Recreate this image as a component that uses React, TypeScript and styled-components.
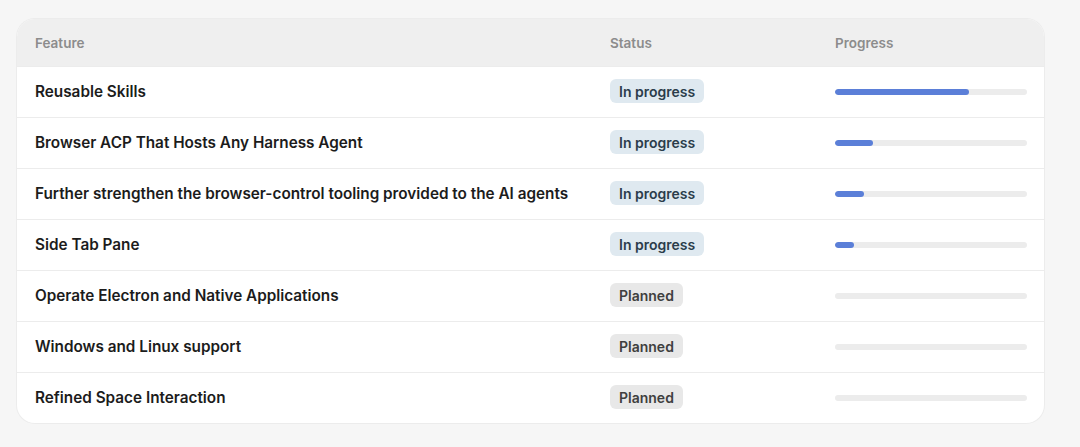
import styled, { createGlobalStyle } from 'styled-components';

type Status = 'progress' | 'planned';

interface Feature {
  name: string;
  status: Status;
  progress: number;
}

const features: Feature[] = [
  { name: 'Reusable Skills', status: 'progress', progress: 70 },
  { name: 'Browser ACP That Hosts Any Harness Agent', status: 'progress', progress: 20 },
  {
    name: 'Further strengthen the browser-control tooling provided to the AI agents',
    status: 'progress',
    progress: 15,
  },
  { name: 'Side Tab Pane', status: 'progress', progress: 10 },
  { name: 'Operate Electron and Native Applications', status: 'planned', progress: 0 },
  { name: 'Windows and Linux support', status: 'planned', progress: 0 },
  { name: 'Refined Space Interaction', status: 'planned', progress: 0 },
];

const App = () => {
  return (
    <Page>
      <GlobalStyle />
      <Card>
        <HeaderRow>
          <HeadCell>Feature</HeadCell>
          <HeadCell>Status</HeadCell>
          <HeadCell>Progress</HeadCell>
        </HeaderRow>
        {features.map((f) => (
          <Row key={f.name}>
            <Name>{f.name}</Name>
            <div>
              <Badge $status={f.status}>
                {f.status === 'progress' ? 'In progress' : 'Planned'}
              </Badge>
            </div>
            <Track>
              {f.progress > 0 && <Fill style={{ width: `${f.progress}%` }} />}
            </Track>
          </Row>
        ))}
      </Card>
    </Page>
  );
};

export default App;

const GlobalStyle = createGlobalStyle`
  body {
    margin: 0;
    background: #f6f6f6;
    font-family: Inter, "Liberation Sans", sans-serif;
  }
`;

const Page = styled.div`
  padding: 19px 36px 24px 17px;
  min-height: 447px;
  box-sizing: border-box;
`;

const Card = styled.div`
  width: 1027px;
  background: #ffffff;
  border-radius: 18px;
  overflow: hidden;
  box-shadow: 0 0 0 1px #ececec;
`;

const HeaderRow = styled.div`
  display: grid;
  grid-template-columns: 575px 225px 1fr;
  align-items: center;
  height: 47px;
  padding: 0 17px 0 18px;
  background: #efefef;
`;

const HeadCell = styled.div`
  font-size: 13.5px;
  font-weight: 600;
  color: #8c8c8c;
`;

const Row = styled.div`
  display: grid;
  grid-template-columns: 575px 225px 1fr;
  align-items: center;
  height: 50px;
  padding: 0 17px 0 18px;
  border-top: 1px solid #ececec;
`;

const Name = styled.div`
  font-size: 15.3px;
  font-weight: 600;
  color: #1c1c1c;
  white-space: nowrap;
  margin-top: -2px;
`;

const Badge = styled.span<{ $status: Status }>`
  display: inline-flex;
  align-items: center;
  height: 24px;
  padding: 0 9px;
  border-radius: 6px;
  font-size: 14px;
  font-weight: 600;
  margin-top: -2px;
  background: ${({ $status }) => ($status === 'progress' ? '#dfe9f0' : '#e8e8e8')};
  color: ${({ $status }) => ($status === 'progress' ? '#2b3d4b' : '#3f3f3f')};
`;

const Track = styled.div`
  height: 6px;
  border-radius: 3px;
  background: #ececec;
  overflow: hidden;
`;

const Fill = styled.div`
  height: 100%;
  border-radius: 3px;
  background: #5b7fd8;
`;
